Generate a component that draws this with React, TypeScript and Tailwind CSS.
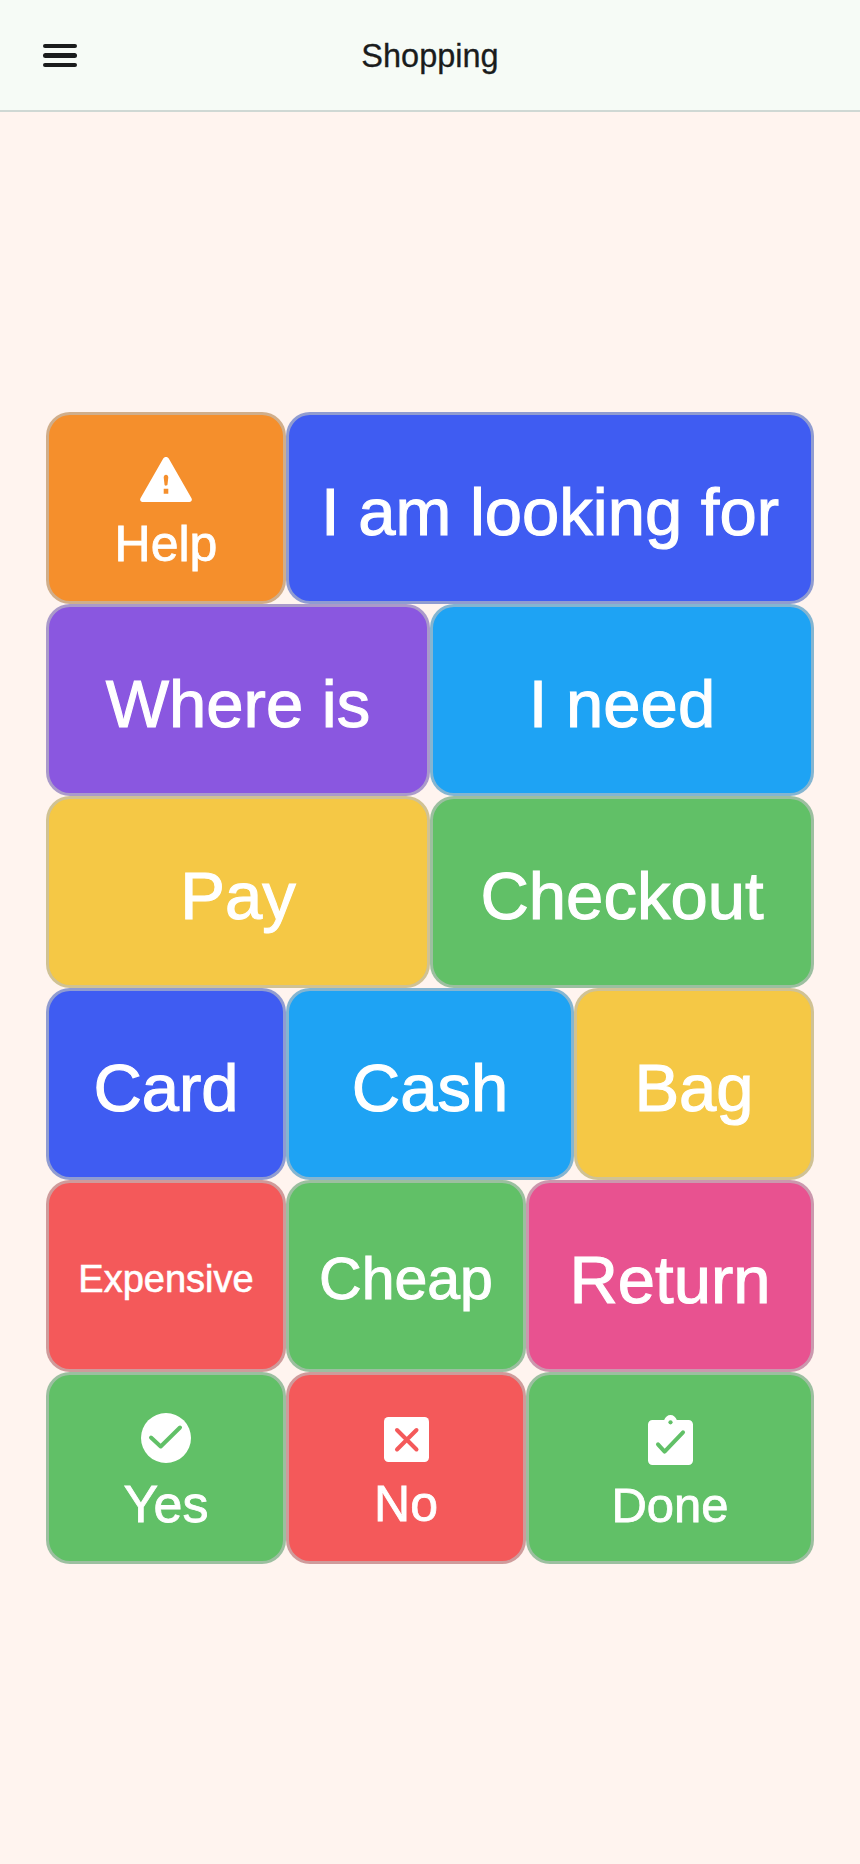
const BORDER = 'border-[3px] border-[#bbbebe]/65';
const BIG = 'text-[67px] [-webkit-text-stroke:1.1px_white]';
const MID = 'text-[50px] [-webkit-text-stroke:0.8px_white]';

function WarningIcon() {
  return (
    <svg viewBox="0 0 52 45" className="h-[45px] w-[52px] fill-white">
      <path
        fillRule="evenodd"
        d="M26 0c1.200 0 2.300.7 2.900 1.700l22.600 39.600c1 1.700-.2 3.700-2.100 3.700H2.600c-1.900 0-3.100-2-2.100-3.700L23.100 1.700C23.700.7 24.800 0 26 0Zm-2.300 20.500c0-1.500 1-2.700 2.300-2.700s2.300 1.200 2.300 2.700l-.8 7c-.1.800-.7 1.200-1.500 1.200s-1.400-.4-1.500-1.200l-.8-7Zm0 11.300h4.600v5h-4.600v-5Z"
      />
    </svg>
  );
}

function YesIcon() {
  return (
    <svg viewBox="0 0 50 50" className="h-[50px] w-[50px]">
      <circle cx="25" cy="25" r="25" fill="#fff" />
      <path d="M10 24.500l9.700 9L39 14.500" fill="none" stroke="#61c067" strokeWidth="4" strokeLinecap="round" strokeLinejoin="round" />
    </svg>
  );
}

function NoIcon() {
  return (
    <svg viewBox="0 0 45 45" className="h-[45px] w-[45px]">
      <rect width="45" height="45" rx="4.500" fill="#fff" />
      <path d="M13 13l19.500 19.500M32.500 13L13 32.500" fill="none" stroke="#f4595a" strokeWidth="4" strokeLinecap="round" />
    </svg>
  );
}

function DoneIcon() {
  return (
    <svg viewBox="0 0 45 50" className="h-[50px] w-[45px]">
      <path
        fill="#fff"
        d="M4.500 5h11.700C17.200 2 19.600 0 22.500 0s5.300 2 6.300 5h11.700C43 5 45 7 45 9.500v36c0 2.500-2 4.500-4.500 4.500h-36C2 50 0 48 0 45.500v-36C0 7 2 5 4.500 5Z"
      />
      <circle cx="22.500" cy="7.300" r="2.100" fill="#61c067" />
      <path d="M10 29.300l6.600 7.300L35 17.300" fill="none" stroke="#61c067" strokeWidth="4" strokeLinecap="round" strokeLinejoin="round" />
    </svg>
  );
}

type Cell = { label: string; span: string; bg: string; text: string; icon?: React.ReactNode };

const CELLS: Cell[] = [
  { label: 'Help', span: 'col-span-5', bg: 'bg-[#f58f2c]', text: MID, icon: <WarningIcon /> },
  { label: 'I am looking for', span: 'col-span-11', bg: 'bg-[#3f5cf2]', text: BIG },
  { label: 'Where is', span: 'col-span-8', bg: 'bg-[#8a57e0]', text: BIG },
  { label: 'I need', span: 'col-span-8', bg: 'bg-[#1ea3f4]', text: BIG },
  { label: 'Pay', span: 'col-span-8', bg: 'bg-[#f5c845]', text: BIG },
  { label: 'Checkout', span: 'col-span-8', bg: 'bg-[#61c067]', text: BIG },
  { label: 'Card', span: 'col-span-5', bg: 'bg-[#3f5cf2]', text: BIG },
  { label: 'Cash', span: 'col-span-6', bg: 'bg-[#1ea3f4]', text: BIG },
  { label: 'Bag', span: 'col-span-5', bg: 'bg-[#f5c845]', text: BIG },
  { label: 'Expensive', span: 'col-span-5', bg: 'bg-[#f4595a]', text: 'text-[38px] [-webkit-text-stroke:0.6px_white]' },
  { label: 'Cheap', span: 'col-span-5', bg: 'bg-[#61c067]', text: 'text-[59px] [-webkit-text-stroke:1px_white]' },
  { label: 'Return', span: 'col-span-6', bg: 'bg-[#e85290]', text: BIG },
  { label: 'Yes', span: 'col-span-5', bg: 'bg-[#61c067]', text: 'text-[52px] [-webkit-text-stroke:0.8px_white]', icon: <YesIcon /> },
  { label: 'No', span: 'col-span-5', bg: 'bg-[#f4595a]', text: MID, icon: <NoIcon /> },
  { label: 'Done', span: 'col-span-6', bg: 'bg-[#61c067]', text: 'text-[49px] [-webkit-text-stroke:0.8px_white]', icon: <DoneIcon /> },
];

export default function App() {
  return (
    <div className="flex min-h-[1864px] flex-col bg-[#fff4ef] font-['Liberation_Sans',Arial,sans-serif]">
      <header className="flex h-[112px] items-center border-b-2 border-[#cfd8d4] bg-[#f6fbf6] px-[43px]">
        <button className="flex w-[36px] flex-col gap-[5px] pt-[1px]" aria-label="Menu">
          <span className="h-[4.5px] w-[34px] rounded-full bg-[#1a1c1c]" />
          <span className="h-[4.5px] w-[34px] rounded-full bg-[#1a1c1c]" />
          <span className="h-[4.5px] w-[34px] rounded-full bg-[#1a1c1c]" />
        </button>
        <h1 className="flex-1 pr-[36px] pt-[2px] text-center text-[32.5px] text-[#1a1c1c] [-webkit-text-stroke:0.3px_#1a1c1c]">
          Shopping
        </h1>
      </header>
      <main className="flex flex-1 items-center justify-center">
        <div className="grid w-[768px] grid-cols-16 auto-rows-[192px]">
          {CELLS.map((cell) => (
            <button
              key={cell.label}
              className={`flex flex-col items-center justify-center rounded-[24px] text-white ${BORDER} ${cell.span} ${cell.bg} ${cell.icon ? 'pt-[12px]' : 'pt-[8px]'}`}
            >
              {cell.icon && <span className="flex h-[50px] items-center">{cell.icon}</span>}
              <span className={`leading-[1.15] ${cell.text} ${cell.icon ? 'mt-[12px]' : ''}`}>{cell.label}</span>
            </button>
          ))}
        </div>
      </main>
    </div>
  );
}
